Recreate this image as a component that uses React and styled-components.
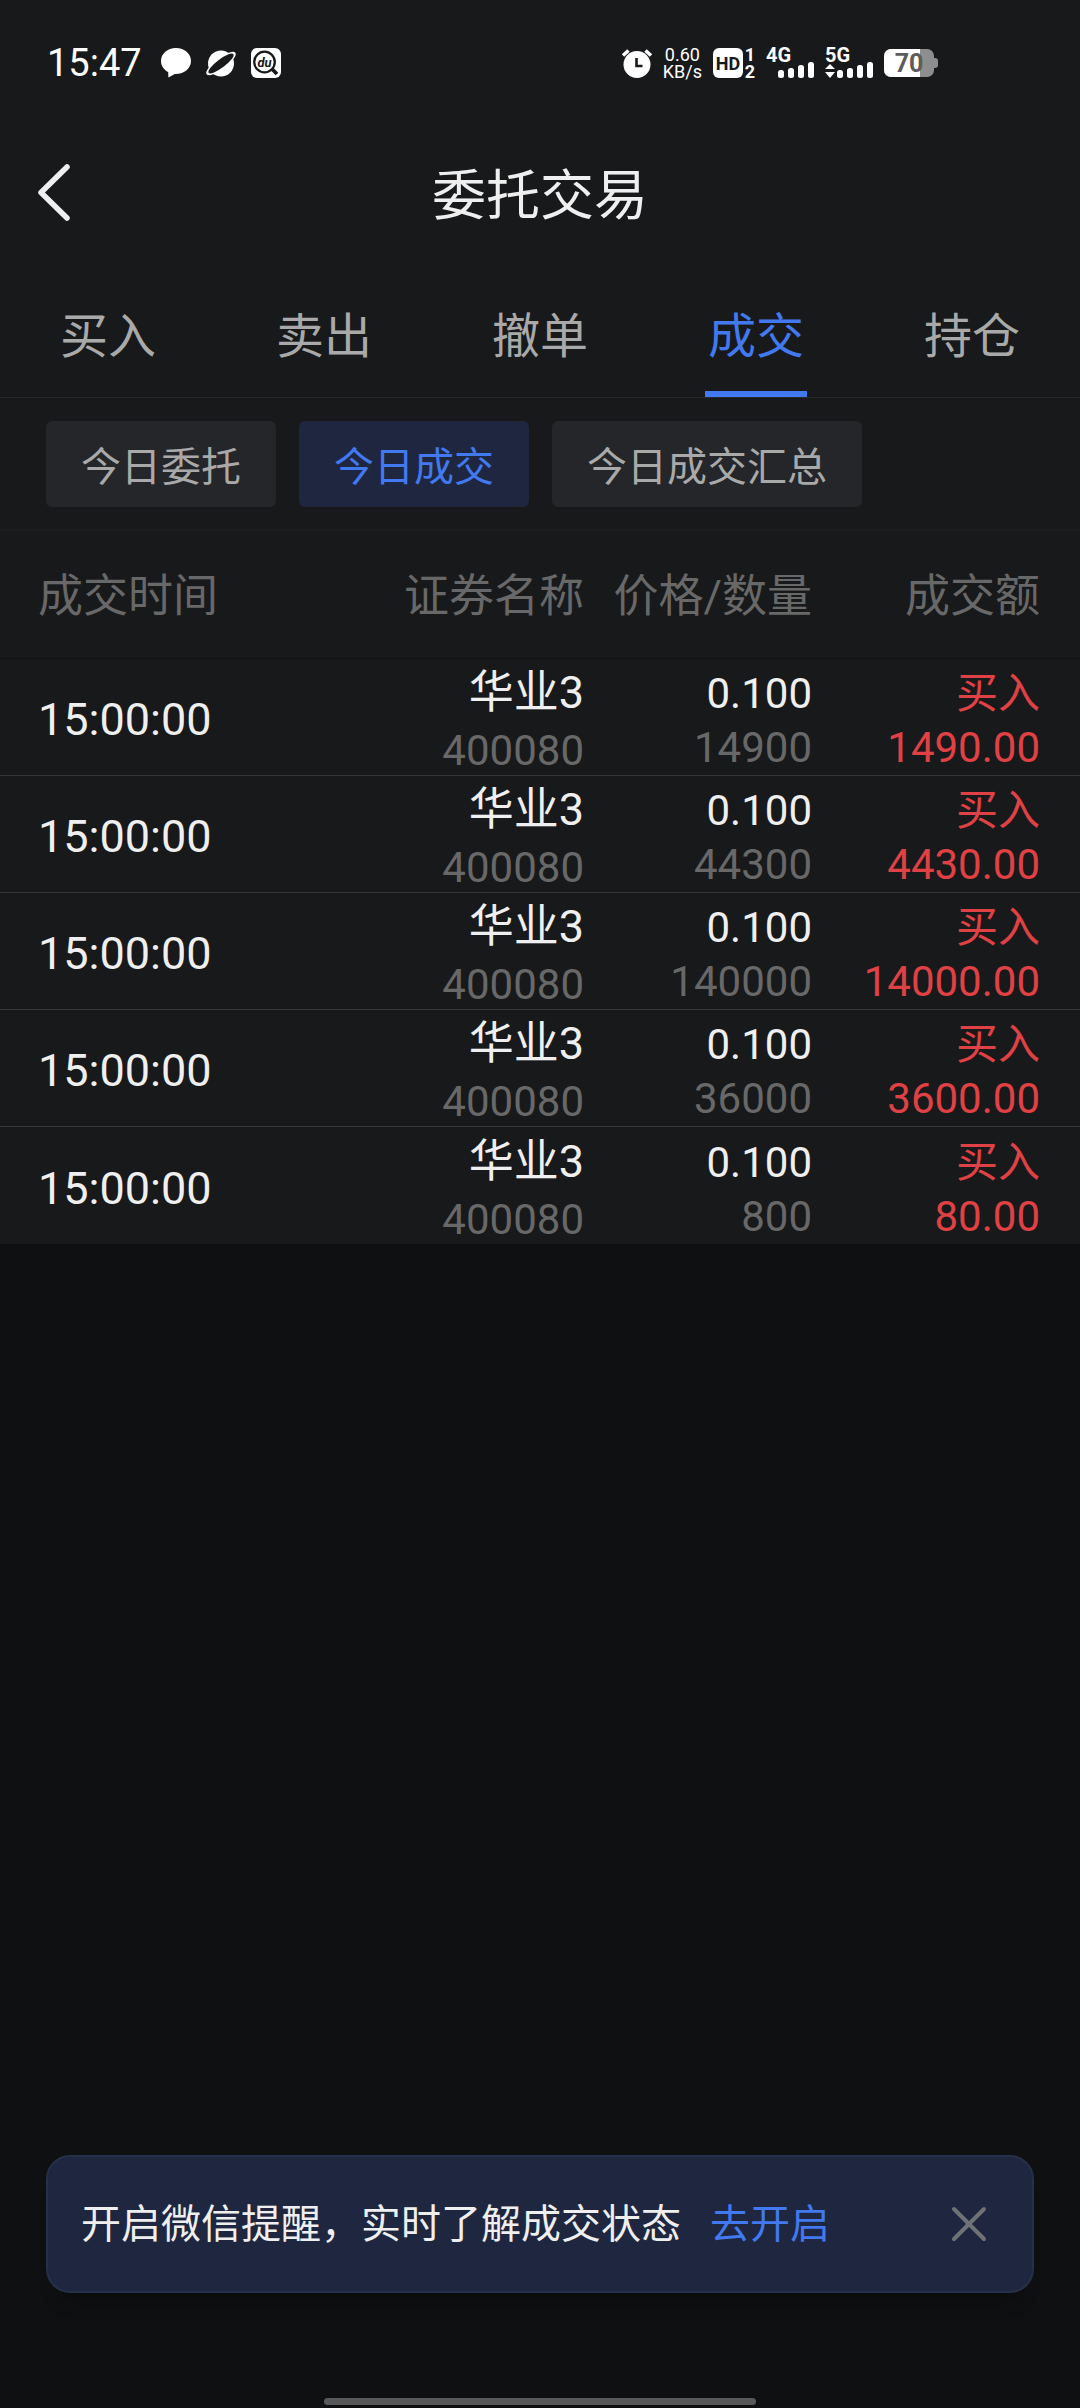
import React, { useState } from 'react';
import styled, { createGlobalStyle } from 'styled-components';

const colors = {
  page: '#0f1011',
  panel: '#18191b',
  text: '#efefef',
  muted: '#a9a9a9',
  dim: '#686868',
  blue: '#4279f0',
  blueDark: '#1e273f',
  red: '#e04144',
  divider: '#343537',
};

const tabs = ['买入', '卖出', '撤单', '成交', '持仓'];
const filters = ['今日委托', '今日成交', '今日成交汇总'];

const trades = [
  { id: 1, time: '15:00:00', name: '华业3', code: '400080', price: '0.100', quantity: '14900', side: '买入', amount: '1490.00' },
  { id: 2, time: '15:00:00', name: '华业3', code: '400080', price: '0.100', quantity: '44300', side: '买入', amount: '4430.00' },
  { id: 3, time: '15:00:00', name: '华业3', code: '400080', price: '0.100', quantity: '140000', side: '买入', amount: '14000.00' },
  { id: 4, time: '15:00:00', name: '华业3', code: '400080', price: '0.100', quantity: '36000', side: '买入', amount: '3600.00' },
  { id: 5, time: '15:00:00', name: '华业3', code: '400080', price: '0.100', quantity: '800', side: '买入', amount: '80.00' },
];

const GlobalStyle = createGlobalStyle`
  * {
    box-sizing: border-box;
  }

  body {
    margin: 0;
    background-color: ${colors.page};
    color: ${colors.text};
    font-family: Roboto, "Noto Sans CJK SC", sans-serif;
  }

  button {
    margin: 0;
    padding: 0;
    border: 0;
    background: none;
    color: inherit;
    font: inherit;
    cursor: pointer;
  }
`;

const Page = styled.div`
  display: flex;
  flex-direction: column;
  min-height: 100vh;
`;

const Panel = styled.div`
  background-color: ${colors.panel};
`;

const StatusBar = styled.div`
  display: flex;
  align-items: center;
  justify-content: space-between;
  height: 126px;
  padding: 0 142px 0 47px;
  color: #fff;
`;

const StatusGroup = styled.div`
  display: flex;
  align-items: center;
  gap: ${({ $gap }) => $gap}px;

  svg {
    display: block;
    overflow: visible;
  }
`;

const Clock = styled.span`
  margin-right: 4px;
  font-size: 38px;
  line-height: 40px;
`;

const Speed = styled.div`
  display: flex;
  flex-direction: column;
  align-items: center;
  font-size: 18px;
  line-height: 17px;
`;

const Header = styled.header`
  display: grid;
  grid-template-columns: 108px 1fr 108px;
  align-items: center;
  height: 136px;
`;

const BackButton = styled.button`
  display: flex;
  height: 108px;
  padding-left: 36px;
  align-items: center;
`;

const Title = styled.h1`
  margin: 0;
  padding-top: 5px;
  font-size: 54px;
  font-weight: 400;
  line-height: 72px;
  text-align: center;
`;

const Tabs = styled.nav`
  display: flex;
  height: 136px;
  border-bottom: 1px solid #27282b;
`;

const Tab = styled.button`
  display: flex;
  flex: 1;
  justify-content: center;
  color: ${({ $active }) => ($active ? colors.blue : colors.muted)};
`;

const TabLabel = styled.span`
  height: 100%;
  padding: 43px 3px 0;
  border-bottom: 6px solid ${({ $active }) => ($active ? colors.blue : 'transparent')};
  font-size: 48px;
  line-height: 64px;
`;

const Filters = styled.div`
  display: flex;
  gap: 23px;
  padding: 23px 46px;
  border-bottom: 1px solid #1c1d1f;
`;

const Filter = styled.button`
  height: 86px;
  padding: 7px 35px 0;
  border-radius: 6px;
  background-color: ${({ $active }) => ($active ? colors.blueDark : '#25262a')};
  color: ${({ $active }) => ($active ? colors.blue : colors.muted)};
  font-size: 40px;
  line-height: 79px;
`;

const Table = styled.table`
  width: 100%;
  border-collapse: separate;
  border-spacing: 0;
  table-layout: fixed;
`;

const HeadCell = styled.th`
  width: ${({ $width }) => ($width ? `${$width}px` : 'auto')};
  height: 128px;
  padding: 5px 0 0;
  border-bottom: 1px solid #111213;
  color: ${colors.dim};
  font-size: 45px;
  font-weight: 400;
  line-height: 60px;
  text-align: right;
  white-space: nowrap;

  &:first-child {
    padding-left: 38px;
    text-align: left;
  }

  &:last-child {
    padding-right: 40px;
  }
`;

const Row = styled.tr`
  &:not(:last-child) td {
    border-bottom: 1px solid ${colors.divider};
  }
`;

const Cell = styled.td`
  height: 117px;
  padding: ${({ $top }) => $top || 8}px 0 0;
  color: ${({ $color }) => $color || colors.text};
  line-height: 48px;
  text-align: right;
  vertical-align: middle;

  &:first-child {
    padding-left: 38px;
    font-size: 45px;
    text-align: left;
  }

  &:last-child {
    padding-right: 40px;
  }
`;

const Stack = styled.div`
  display: flex;
  flex-direction: column;
  gap: ${({ $gap }) => $gap || 6}px;
`;

const Line = styled.div`
  color: ${({ $dim }) => ($dim ? colors.dim : 'inherit')};
  font-size: ${({ $large }) => ($large ? 45 : 42)}px;
`;

const Footer = styled.footer`
  display: flex;
  flex-direction: column;
  margin-top: auto;
  padding: 0 46px 3px;
`;

const Notice = styled.div`
  display: flex;
  align-items: center;
  height: 138px;
  padding: 0 45px 0 33px;
  border: 2px solid #253049;
  border-radius: 24px;
  background-color: ${colors.blueDark};
  box-shadow: 0 20px 20px -16px rgba(0, 0, 0, 0.4);
  font-size: 40px;
  line-height: 54px;
`;

const NoticeText = styled.p`
  margin: 0;
  padding-top: 2px;
`;

const NoticeLink = styled.a`
  margin-left: 29px;
  color: ${colors.blue};
  text-decoration: none;
`;

const CloseButton = styled.button`
  display: flex;
  margin-left: auto;
`;

const HomeBar = styled.div`
  width: 40vw;
  height: 7px;
  margin: 105px auto 0;
  border-radius: 4px;
  background-color: #585858;
`;

const ChatIcon = () => (
  <svg width="30" height="30" viewBox="0 0 30 30" fill="#fff">
    <path d="M15 0C6.500 0 0 5.600 0 13c0 4.700 2.800 8.800 7.200 11.100L7.400 29.500l6.400-3.600C23 26.300 30 20.500 30 13 30 5.600 23.500 0 15 0Z" />
  </svg>
);

const PlanetIcon = () => (
  <svg width="30" height="30" viewBox="0 0 30 30">
    <circle cx="15" cy="15.500" r="13" fill="#fff" />
    <g transform="rotate(-37 15 15.500)">
      <ellipse cx="15" cy="15.500" rx="18" ry="5.500" fill="#fff" />
      <ellipse cx="15" cy="15.500" rx="15.500" ry="4.200" fill={colors.panel} />
    </g>
  </svg>
);

const SearchAppIcon = () => (
  <svg width="30" height="30" viewBox="0 0 30 30">
    <rect width="30" height="30" rx="6" fill="#fff" />
    <circle cx="13.500" cy="14" r="10.300" fill="none" stroke={colors.panel} strokeWidth="2.300" />
    <path d="m21 21 5 5" stroke={colors.panel} strokeWidth="3.800" />
    <text x="13.500" y="18.500" fill={colors.panel} fontSize="13" fontWeight="700" fontStyle="italic" textAnchor="middle">du</text>
  </svg>
);

const AlarmIcon = () => (
  <svg width="30" height="30" viewBox="0 0 30 30" fill="none">
    <circle cx="15" cy="16.500" r="13.500" fill="#fff" />
    <path d="M1 7.500 6.500 2.500M29 7.500 23.500 2.500" stroke="#fff" strokeWidth="3.600" />
    <path d="M14.500 10v8h6" stroke={colors.panel} strokeWidth="2.600" />
  </svg>
);

const HdIcon = () => (
  <svg width="42" height="30" viewBox="0 0 42 30" fontWeight="700">
    <rect width="30" height="30" rx="6" fill="#fff" />
    <text x="15" y="21.500" fill={colors.panel} fontSize="18" textAnchor="middle">HD</text>
    <text x="37" y="13" fill="#fff" fontSize="18" textAnchor="middle">1</text>
    <text x="37" y="30" fill="#fff" fontSize="18" textAnchor="middle">2</text>
  </svg>
);

const SignalIcon = ({ label, transfer }) => (
  <svg width="48" height="30" viewBox="0 0 48 30" fill="#fff">
    <text x="0" y="14" fontSize="20" fontWeight="700">{label}</text>
    {transfer && <path d="m0 21 5-5 5 5ZM0 24h10l-5 6Z" />}
    <rect x="12" y="22" width="6" height="8" rx="2.500" />
    <rect x="22" y="20" width="6" height="10" rx="2.500" />
    <rect x="32" y="17" width="6" height="13" rx="2.500" />
    <rect x="42" y="14" width="6" height="16" rx="2.500" />
  </svg>
);

const BatteryIcon = () => (
  <svg width="54" height="28" viewBox="0 0 54 28">
    <rect width="50" height="28" rx="7" fill="#8e8e8e" />
    <path d="M7 0h29v28H7a7 7 0 0 1-7-7V7a7 7 0 0 1 7-7Z" fill="#fff" />
    <path d="M50 9h1a3 3 0 0 1 3 3v4a3 3 0 0 1-3 3h-1Z" fill="#8e8e8e" />
    <text x="25" y="23" fill="#5c5c5c" fontSize="25" fontWeight="700" textAnchor="middle">70</text>
  </svg>
);

const BackIcon = () => (
  <svg width="36" height="60" viewBox="0 0 36 60" fill="none" stroke={colors.text} strokeWidth="5.500" strokeLinecap="round" strokeLinejoin="round">
    <path d="M31 3 5 28.500 31 54" />
  </svg>
);

const CloseIcon = () => (
  <svg width="36" height="36" viewBox="0 0 36 36" stroke="#707276" strokeWidth="4" strokeLinecap="round">
    <path d="m3 3 30 30M33 3 3 33" />
  </svg>
);

const App = () => {
  const [activeTab, setActiveTab] = useState('成交');
  const [activeFilter, setActiveFilter] = useState('今日成交');
  const [noticeOpen, setNoticeOpen] = useState(true);

  return (
    <Page>
      <GlobalStyle />
      <Panel>
        <StatusBar>
          <StatusGroup $gap={15}>
            <Clock>15:47</Clock>
            <ChatIcon />
            <PlanetIcon />
            <SearchAppIcon />
          </StatusGroup>
          <StatusGroup $gap={11}>
            <AlarmIcon />
            <Speed>
              <span>0.60</span>
              <span>KB/s</span>
            </Speed>
            <HdIcon />
            <SignalIcon label="4G" />
            <SignalIcon label="5G" transfer />
            <BatteryIcon />
          </StatusGroup>
        </StatusBar>

        <Header>
          <BackButton aria-label="返回"><BackIcon /></BackButton>
          <Title>委托交易</Title>
        </Header>

        <Tabs>
          {tabs.map((tab) => (
            <Tab key={tab} $active={tab === activeTab} onClick={() => setActiveTab(tab)}>
              <TabLabel $active={tab === activeTab}>{tab}</TabLabel>
            </Tab>
          ))}
        </Tabs>

        <Filters>
          {filters.map((filter) => (
            <Filter key={filter} $active={filter === activeFilter} onClick={() => setActiveFilter(filter)}>
              {filter}
            </Filter>
          ))}
        </Filters>

        <Table>
          <thead>
            <tr>
              <HeadCell>成交时间</HeadCell>
              <HeadCell $width={228}>证券名称</HeadCell>
              <HeadCell $width={228}>价格/数量</HeadCell>
              <HeadCell $width={268}>成交额</HeadCell>
            </tr>
          </thead>
          <tbody>
            {trades.map((trade) => (
              <Row key={trade.id}>
                <Cell $top={6}>{trade.time}</Cell>
                <Cell $top={10}>
                  <Stack $gap={10}>
                    <Line $large>{trade.name}</Line>
                    <Line $dim>{trade.code}</Line>
                  </Stack>
                </Cell>
                <Cell>
                  <Stack>
                    <Line>{trade.price}</Line>
                    <Line $dim>{trade.quantity}</Line>
                  </Stack>
                </Cell>
                <Cell $color={colors.red}>
                  <Stack>
                    <Line>{trade.side}</Line>
                    <Line>{trade.amount}</Line>
                  </Stack>
                </Cell>
              </Row>
            ))}
          </tbody>
        </Table>
      </Panel>

      <Footer>
        {noticeOpen && (
          <Notice>
            <NoticeText>
              开启微信提醒，实时了解成交状态
              <NoticeLink href="#wechat">去开启</NoticeLink>
            </NoticeText>
            <CloseButton aria-label="关闭" onClick={() => setNoticeOpen(false)}><CloseIcon /></CloseButton>
          </Notice>
        )}
        <HomeBar />
      </Footer>
    </Page>
  );
};

export default App;
